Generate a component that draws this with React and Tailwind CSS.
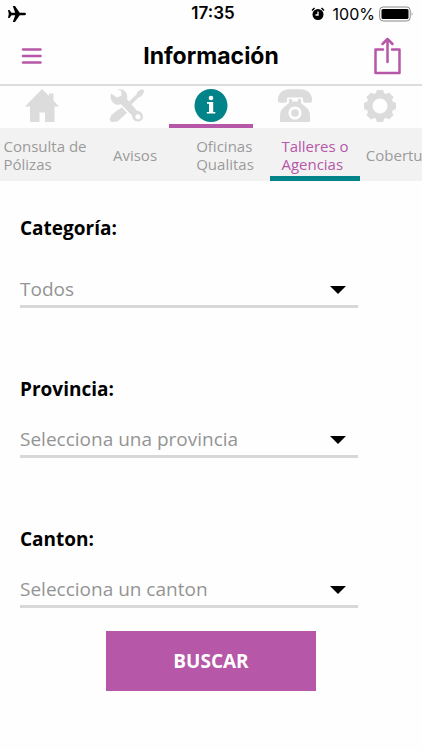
import { useState } from "react";

const HomeIcon = () => (
  <svg viewBox="0 0 36 34" className="h-[34px] w-9" fill="currentColor">
    <path d="M18 0 L25 7 V4.500 H29.500 V11.500 L35 17.500 H30.500 V33 H21 V23.500 H15.500 V33 H6 V17.500 H1 Z" />
  </svg>
);

const ToolsIcon = () => (
  <svg viewBox="0 0 36 34" className="h-[34px] w-9" fill="currentColor">
    {/* wrench */}
    <path
      fillRule="evenodd"
      d="M2 4.500 L8 8.500 L12.500 6.500 L12 1.500 L8.500 0.300 C14 -1 19.500 3.500 18 10 L28 21.800 C32 22 34.500 25.500 34 28.800 C33.500 31.500 31 33 28.500 32.600 C25 32 23 30 23 26.500 L12 15.300 C6 17.500 0 12 2 4.500 Z M29 25.200 a2.600 2.600 0 1 0 0.010 0 Z"
    />
    {/* screwdriver */}
    <path d="M35.500 2.300 L32.500 7.300 L29.800 8.200 L22.500 15.500 L19.800 12.700 L27.500 5.500 L28.300 2.800 L33.300 0 Z" />
    <path d="M13 18.500 L18 23.700 L14.500 27 L8.500 32.500 L2.500 33 L0.500 30.800 L2.500 26 L8 21.500 Z" />
  </svg>
);

const InfoIcon = () => (
  <svg viewBox="0 0 34 34" className="size-[34px]">
    <circle cx="17" cy="16.500" r="16.500" fill="#00848a" />
    <circle cx="17" cy="9" r="2.300" fill="#fff" />
    <path d="M13 13 H19.200 V23 H21.300 V24.600 H12.800 V23 H15 V14.800 H13 Z" fill="#fff" />
  </svg>
);

const PhoneIcon = () => (
  <svg viewBox="0 0 36 34" className="h-[34px] w-9" fill="currentColor">
    <path d="M1 12 C0 5.500 5 0.300 12 0.300 H24 C31 0.300 36 5.500 35 12 Q34.800 13.800 33 13.800 H28 Q26 13.800 26 12 V9.500 Q26 8.500 25 8.500 H11 Q10 8.500 10 9.500 V12 Q10 13.800 8 13.800 H3 Q1.200 13.800 1 12 Z" />
    <path
      fillRule="evenodd"
      d="M12 10 H15 V12.500 H21 V10 H24 V14 L31 20 Q33 23 33 26 V32 Q33 33 32 33 H4 Q3 33 3 32 V26 Q3 23 5 20 L12 14 Z M18 17.500 a6.500 6.500 0 1 0 0.010 0 Z"
    />
    <circle cx="18" cy="24" r="3.800" />
  </svg>
);

const GearIcon = () => (
  <svg viewBox="-17 -17 34 34" className="size-[34px]" fill="none">
    <circle r="10.500" stroke="currentColor" strokeWidth="6" />
    <g fill="currentColor" stroke="currentColor" strokeWidth="2" strokeLinejoin="round">
      <path id="tooth" d="M-3.500 -11 L-2.500 -15 H2.500 L3.500 -11 Z" />
      <use href="#tooth" transform="rotate(45)" />
      <use href="#tooth" transform="rotate(90)" />
      <use href="#tooth" transform="rotate(135)" />
      <use href="#tooth" transform="rotate(180)" />
      <use href="#tooth" transform="rotate(225)" />
      <use href="#tooth" transform="rotate(270)" />
      <use href="#tooth" transform="rotate(315)" />
    </g>
  </svg>
);

const sections = [
  { name: "Inicio", Icon: HomeIcon },
  { name: "Asistencia", Icon: ToolsIcon },
  { name: "Información", Icon: InfoIcon },
  { name: "Teléfonos", Icon: PhoneIcon },
  { name: "Ajustes", Icon: GearIcon },
];

const tabs = ["Consulta de\nPólizas", "Avisos", "Oficinas\nQualitas", "Talleres o\nAgencias", "Coberturas"];

const StatusBar = () => (
  <div className="grid h-7 grid-cols-3 items-center px-2 font-['Inter',sans-serif] text-black">
    <svg viewBox="0 0 18 16" className="h-4 w-[18px]" fill="currentColor">
      <path d="M18 8 C18 7 17 6.700 16 6.700 H11.700 L7 0 H4.800 L7.200 6.700 H3.500 L1.500 4 H0 L0.800 8 L0 12 H1.500 L3.500 9.300 H7.200 L4.800 16 H7 L11.700 9.300 H16 C17 9.300 18 9 18 8 Z" />
    </svg>
    <span className="pl-1 text-center text-[17px] font-semibold">17:35</span>
    <div className="flex items-center justify-end gap-1">
      <svg viewBox="0 0 14 14" className="mr-1 size-[14px] shrink-0">
        <circle cx="7" cy="7.500" r="5.500" />
        <path d="M1 3.500 L3.500 1 M13 3.500 L10.500 1" stroke="#000" strokeWidth="1.500" />
        <path d="M7 4.500 V8 H4.500" fill="none" stroke="#fff" strokeWidth="1.300" />
      </svg>
      <span className="text-base">100%</span>
      <svg viewBox="0 0 35 16" className="h-4 w-[35px] shrink-0">
        <rect x="0.700" y="1" width="30.500" height="14" rx="3.500" fill="none" stroke="#888" />
        <rect x="2.500" y="3" width="27" height="10" rx="1.500" />
        <path d="M32.700 6 Q34.500 8 32.700 10 Z" fill="#888" />
      </svg>
    </div>
  </div>
);

const Header = () => (
  <header className="flex h-[58px] items-center justify-between border-b-2 border-[#dcdcdc] px-5 text-[#b657a8]">
    <button type="button" aria-label="Menú" className="w-8 cursor-pointer">
      <svg viewBox="0 0 24 20" className="h-5 w-6" stroke="currentColor" strokeWidth="2.500" strokeLinecap="round">
        <path d="M3 3.500 H20.500 M3 10 H20.500 M3 16.500 H20.500" />
      </svg>
    </button>
    <h1 className="font-['Inter',sans-serif] text-[23px] font-bold text-black">Información</h1>
    <button type="button" aria-label="Compartir" className="w-8 cursor-pointer">
      <svg viewBox="0 0 28 38" className="ml-auto h-[38px] w-7" fill="none" stroke="currentColor" strokeWidth="2.500">
        <path d="M9 12.500 H1.500 V36 H25.500 V12.500 H18 M13.500 25 V3 M8.500 7 L13.500 2 L18.500 7" strokeLinejoin="round" strokeLinecap="round" />
      </svg>
    </button>
  </header>
);

const SelectField = ({ id, label, options, gap }) => (
  <div className={`flex w-4/5 flex-col ${gap}`}>
    <label htmlFor={id} className="text-[19px] leading-7 font-bold text-black">
      {label}
    </label>
    <div className="relative">
      <select
        id={id}
        className="h-10 w-full appearance-none border-b-3 border-[#d8d8d8] bg-transparent pt-1.5 pr-8 text-[19px] text-[#949494] outline-none"
      >
        {options.map((option) => (
          <option key={option}>{option}</option>
        ))}
      </select>
      <svg viewBox="0 0 16 8" className="pointer-events-none absolute top-[18px] right-3 h-2 w-4">
        <path d="M0 0 H16 L8 8 Z" />
      </svg>
    </div>
  </div>
);

const App = () => {
  const [section, setSection] = useState("Información");
  const [tab, setTab] = useState("Talleres o\nAgencias");

  const onSubmitHandler = (e) => {
    e.preventDefault();
  };

  return (
    <div className="min-h-screen bg-[#fefefe] font-['Open_Sans','Noto_Sans',sans-serif]">
      <StatusBar />
      <Header />

      <nav className="grid h-[42px] grid-cols-5">
        {sections.map(({ name, Icon }) => (
          <button
            key={name}
            type="button"
            aria-label={name}
            onClick={() => setSection(name)}
            className={`flex cursor-pointer justify-center border-b-4 pt-[3px] text-[#dcdcdc] ${
              section === name ? "border-[#b657a8]" : "border-transparent"
            }`}
          >
            <Icon />
          </button>
        ))}
      </nav>

      <nav className="flex h-[53px] overflow-x-auto overflow-y-hidden bg-[#f2f2f2] [scrollbar-width:none]">
        {tabs.map((name) => (
          <button
            key={name}
            type="button"
            onClick={() => setTab(name)}
            className={`flex w-[90px] shrink-0 cursor-pointer items-center justify-center border-b-[5px] pt-1.5 text-left text-[15px] leading-[18px] whitespace-pre ${
              tab === name ? "border-[#00848a] text-[#b657a8]" : "border-transparent text-[#9b9b9b]"
            }`}
          >
            {name}
          </button>
        ))}
      </nav>

      <form onSubmit={onSubmitHandler} className="px-5 pt-[33px] pb-10">
        <div className="-mr-10 flex flex-col gap-[67px]">
          <SelectField id="categoria" label="Categoría:" options={["Todos"]} gap="gap-[26px]" />
          <SelectField id="provincia" label="Provincia:" options={["Selecciona una provincia"]} gap="gap-[15px]" />
          <SelectField id="canton" label="Canton:" options={["Selecciona un canton"]} gap="gap-[15px]" />
        </div>
        <button
          type="submit"
          className="mx-auto mt-[23px] block h-[60px] w-[55%] cursor-pointer bg-[#b657a8] text-[19px] font-bold text-white"
        >
          BUSCAR
        </button>
      </form>
    </div>
  );
};

export default App;
